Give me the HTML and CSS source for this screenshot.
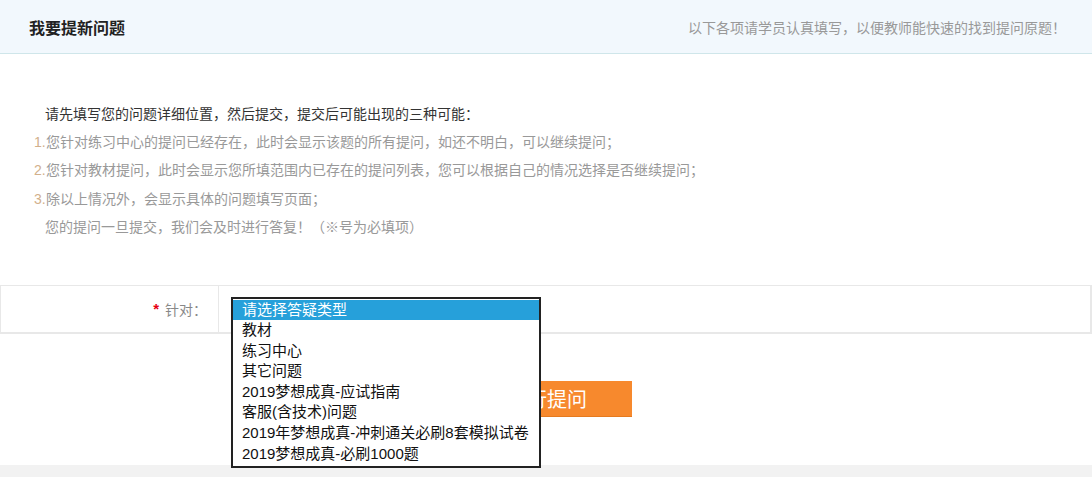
FILE: index.html
```html
<!DOCTYPE html>
<html lang="zh">
<head>
<meta charset="utf-8">
<title>我要提新问题</title>
<link rel="stylesheet" href="styles.css">
</head>
<body>
<div class="page">
  <div class="header">
    <h1 class="title">我要提新问题</h1>
    <div class="tip">以下各项请学员认真填写，以便教师能快速的找到提问原题！</div>
  </div>
  <div class="main">
    <div class="intro">
      <p class="lead">请先填写您的问题详细位置，然后提交，提交后可能出现的三种可能：</p>
      <p class="item"><span class="num">1.</span>您针对练习中心的提问已经存在，此时会显示该题的所有提问，如还不明白，可以继续提问；</p>
      <p class="item"><span class="num">2.</span>您针对教材提问，此时会显示您所填范围内已存在的提问列表，您可以根据自己的情况选择是否继续提问；</p>
      <p class="item"><span class="num">3.</span>除以上情况外，会显示具体的问题填写页面；</p>
      <p class="item">您的提问一旦提交，我们会及时进行答复！（<span class="x">※</span>号为必填项）</p>
    </div>
    <div class="form-row">
      <div class="label"><span class="req">*</span>针对：</div>
      <div class="field">
        <div class="dropdown">
          <div class="opt selected">请选择答疑类型</div>
          <div class="opt">教材</div>
          <div class="opt">练习中心</div>
          <div class="opt">其它问题</div>
          <div class="opt">2019梦想成真-应试指南</div>
          <div class="opt">客服(含技术)问题</div>
          <div class="opt">2019年梦想成真-冲刺通关必刷8套模拟试卷</div>
          <div class="opt">2019梦想成真-必刷1000题</div>
        </div>
      </div>
    </div>
    <div class="actions">
      <button class="btn" type="button">进行提问</button>
    </div>
  </div>
  <div class="footer"></div>
</div>
</body>
</html>
```
FILE: styles.css
```css
* { box-sizing: border-box; }
html, body { margin: 0; padding: 0; background: #fff; }
body {
  font-family: "Noto Sans CJK SC", "Liberation Sans", sans-serif;
  font-size: 14px;
  color: #333;
  width: 1092px;
  height: 477px;
  overflow: hidden;
}
.page { display: flex; flex-direction: column; height: 477px; }
.header {
  height: 54px;
  background: #f2f8fd;
  border-bottom: 1px solid #cfe6ea;
  display: flex;
  align-items: center;
  justify-content: space-between;
  padding: 0 26px 0 29px;
  flex-shrink: 0;
}
.title {
  margin: 0;
  font-size: 16px;
  font-weight: bold;
  color: #222;
  line-height: 1;
}
.tip { font-size: 14px; color: #999; line-height: 1; }
.main { flex: 1; position: relative; }
.intro { padding: 46px 0 0 45px; }
.intro p { margin: 0; line-height: 27.5px; white-space: nowrap; }
.lead { color: #333; }
.item { color: #999; }
.num { color: #d2b08b; margin-left: -11px; display: inline-block; width: 12px; font-family: "Liberation Sans", sans-serif; font-size: 14px; }
.x { color: #999; }
.form-row {
  margin-top: 44px;
  height: 49px;
  border: 2px solid #e8e8e8;
  border-width: 1px 2px 2px 1px;
  display: flex;
}
.label {
  width: 218px;
  border-right: 1px solid #e8e8e8;
  display: flex;
  align-items: center;
  justify-content: flex-end;
  padding-right: 11px;
  color: #888;
  font-size: 14px;
}
.req { color: #e60012; font-weight: bold; margin-right: 6px; font-family: "Liberation Sans", sans-serif; font-size: 15px; }
.field { flex: 1; position: relative; }
.dropdown {
  position: absolute;
  left: 12px;
  top: 11px;
  width: 310px;
  border: 2px solid #222;
  background: #fff;
  padding: 1px 0 2px;
  z-index: 5;
  font-family: "Liberation Sans", "Noto Sans CJK SC", sans-serif;
  font-size: 15px;
  color: #111;
}
.opt { height: 20.6px; line-height: 20.6px; padding-left: 9px; white-space: nowrap; }
.opt.selected { background: #26a0da; color: #fff; }
.actions { display: flex; justify-content: flex-start; padding: 47px 0 0 462px; }
.btn {
  width: 170px;
  height: 36px;
  background: #f7892d;
  border: 0;
  border-bottom: 1px solid #e57a1f;
  color: #fff;
  font-family: "Noto Sans CJK SC", "Liberation Sans", sans-serif;
  font-size: 20px;
  padding: 0;
  line-height: 36px;
}
.footer { height: 12px; background: #f2f2f2; flex-shrink: 0; }
```
